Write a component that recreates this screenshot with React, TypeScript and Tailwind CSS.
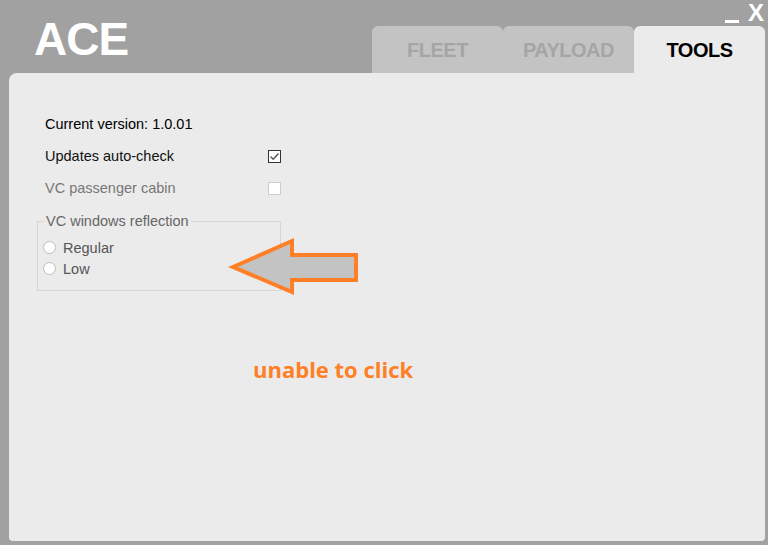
import React from 'react';

const TABS = [
  { label: 'FLEET', active: false },
  { label: 'PAYLOAD', active: false },
  { label: 'TOOLS', active: true },
];

const Checkbox: React.FC<{ checked?: boolean }> = ({ checked }) => (
  <div
    className={`w-[13px] h-[13px] border bg-white flex items-center justify-center ${
      checked ? 'border-[#333333]' : 'border-[#cccccc]'
    }`}
  >
    {checked && (
      <svg width="11" height="11" viewBox="0 0 11 11">
        <path d="M1.5 5.5 L4.2 8.2 L9.5 2.5" fill="none" stroke="#555555" strokeWidth="1.4" />
      </svg>
    )}
  </div>
);

const Radio: React.FC<{ label: string }> = ({ label }) => (
  <div className="flex items-center h-[21px]">
    <div className="w-[13px] h-[13px] rounded-full bg-white border border-[#bdbdbd]" />
    <span className="ml-[7px] text-[14.5px] leading-[16px] text-[#555555]">{label}</span>
  </div>
);

export default function App() {
  return (
    <div
      className="w-[768px] h-[545px] bg-[#a1a1a1] flex flex-col overflow-hidden"
      style={{ fontFamily: '"Liberation Sans", Arial, sans-serif' }}
    >
      {/* Header */}
      <div className="h-[73px] flex justify-between shrink-0">
        <div className="pl-[34px] pt-[16px] text-white font-bold text-[46px] leading-none tracking-[-1px]">
          ACE
        </div>
        <div className="flex flex-col justify-between pr-[3px]">
          <div className="flex items-start justify-end gap-[9px] pt-[3px] pr-[1px] text-white">
            <div className="w-[14px] h-[3px] bg-white mt-[17px]" />
            <span className="font-bold text-[24px] leading-[20px]">X</span>
          </div>
          <div className="flex">
            {TABS.map(t => (
              <div
                key={t.label}
                className={`w-[131px] h-[47px] rounded-t-[6px] flex items-center justify-center font-bold text-[20px] tracking-[-0.5px] ${
                  t.active ? 'bg-[#ebebeb] text-black' : 'bg-[#c3c3c3] text-[#a5a5a5]'
                }`}
              >
                {t.label}
              </div>
            ))}
          </div>
        </div>
      </div>

      {/* Panel */}
      <div className="relative ml-[9px] mr-[3px] h-[468px] bg-[#ebebeb] rounded-tl-[8px] rounded-b-[4px]">
        <div className="pl-[36px] pt-[43px] flex flex-col">
          <div className="h-[16px] text-[14.5px] leading-[16px] text-black">Current version: 1.0.01</div>
          <div className="flex items-center h-[16px] mt-[16px]">
            <span className="w-[223px] text-[14.5px] leading-[16px] text-[#111111]">Updates auto-check</span>
            <Checkbox checked />
          </div>
          <div className="flex items-center h-[16px] mt-[16px]">
            <span className="w-[223px] text-[14.5px] leading-[16px] text-[#777777]">VC passenger cabin</span>
            <Checkbox />
          </div>

          <fieldset className="w-[244px] h-[78px] -ml-[8px] mt-[17px] border border-[#d6d6d6] pl-[5px] pt-[8px]">
            <legend className="ml-[1px] px-[2px] text-[14.5px] leading-[16px] text-[#666666]">VC windows reflection</legend>
            <Radio label="Regular" />
            <Radio label="Low" />
          </fieldset>
        </div>

        {/* annotation */}
        <svg className="absolute left-0 top-0 pointer-events-none" width="400" height="260">
          <polygon
            points="224,194 283,168 283,182 347,182 347,207 283,207 283,219"
            fill="#c3c3c3"
            stroke="#ff7f27"
            strokeWidth="4"
            strokeLinejoin="miter"
          />
        </svg>
        <div
          className="absolute left-[244px] top-[282px] text-[22px] leading-[28px] font-bold text-[#ff7f27]"
          style={{ fontFamily: '"Open Sans", sans-serif' }}
        >
          unable to click
        </div>
      </div>
    </div>
  );
}
